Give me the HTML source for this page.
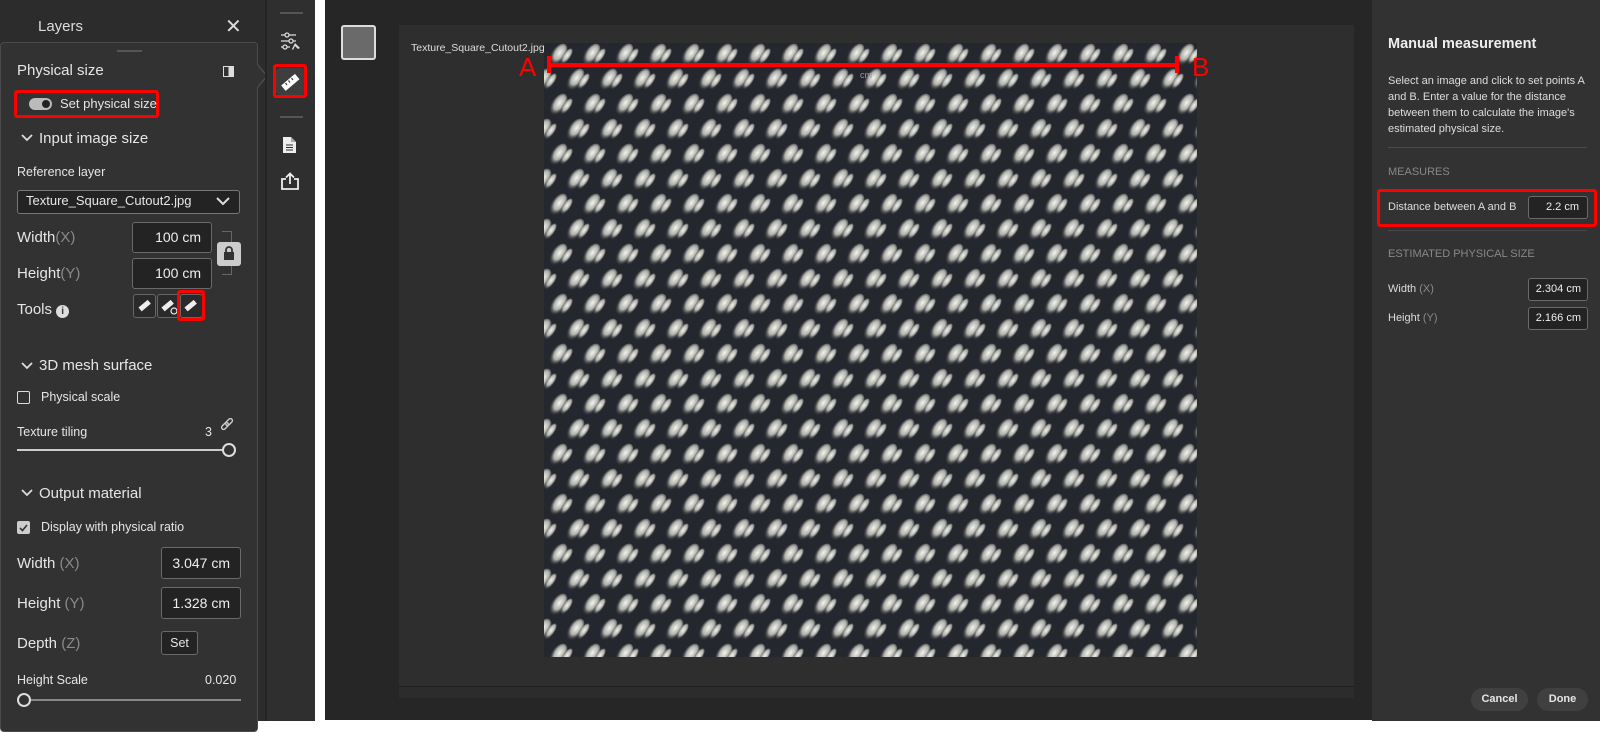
<!DOCTYPE html>
<html><head><meta charset="utf-8"><style>
*{margin:0;padding:0;box-sizing:border-box}
body{width:1600px;height:721px;overflow:hidden;background:#fff;font-family:"Liberation Sans",sans-serif;color:#e6e6e6;position:relative}
.a{position:absolute}
.t{position:absolute;white-space:nowrap}
.inp{position:absolute;border:1px solid #6a6a6a;border-radius:3px;background:#232323;text-align:right;padding-right:10px;color:#eee}
.g{color:#8a8a8a}
.rb{position:absolute;border:3px solid #f00;border-radius:3px}
.tb{position:absolute;border:1px solid #666;border-radius:3px;background:#2a2a2a;width:23px;height:24px}
</style></head><body>
<div class="a" style="left:0;top:0;width:267px;height:721px;background:#2c2c2c"></div>
<div class="t" style="left:38px;top:18px;font-size:15px;color:#ddd">Layers</div>
<div class="t" style="left:225px;top:14px;font-size:20px;color:#ddd">✕</div>
<div class="a" style="left:0;top:42px;width:258px;height:690px;background:#323232;border:1px solid #4a4a4a;border-radius:4px"></div>
<div class="a" style="left:258px;top:64px;width:0;height:0;border-top:12px solid transparent;border-bottom:12px solid transparent;border-left:10px solid #4a4a4a"></div>
<div class="a" style="left:257px;top:65px;width:0;height:0;border-top:11px solid transparent;border-bottom:11px solid transparent;border-left:9px solid #323232"></div>
<div class="a" style="left:117px;top:50px;width:25px;height:2px;background:#555"></div>
<div class="t" style="left:17px;top:62px;font-size:15px">Physical size</div>
<div class="a" style="left:223px;top:66px;width:11px;height:11px;border:1.5px solid #ddd;background:linear-gradient(90deg,transparent 50%,#ddd 50%)"></div>
<div class="rb" style="left:14px;top:90px;width:145px;height:28px"></div>
<div class="a" style="left:29px;top:98px;width:23px;height:12px;border-radius:6px;background:#bbb"></div>
<div class="a" style="left:42px;top:100px;width:8px;height:8px;border-radius:50%;background:#222"></div>
<div class="t" style="left:60px;top:96px;font-size:13px">Set physical size</div>
<svg class="a" style="left:21px;top:134px" width="12" height="8"><path d="M1 1L6 6L11 1" stroke="#ddd" stroke-width="1.8" fill="none"/></svg>
<div class="t" style="left:39px;top:130px;font-size:15px">Input image size</div>
<div class="t" style="left:17px;top:165px;font-size:12.5px">Reference layer</div>
<div class="a" style="left:17px;top:190px;width:223px;height:24px;border:1px solid #777;border-radius:3px;background:#232323"></div>
<div class="t" style="left:26px;top:193px;font-size:13px">Texture_Square_Cutout2.jpg</div>
<svg class="a" style="left:216px;top:196px" width="14" height="10"><path d="M1 2 L7 8 L13 2" stroke="#ddd" stroke-width="2" fill="none"/></svg>
<div class="t" style="left:17px;top:229px;font-size:15px">Width<span class="g">(X)</span></div>
<div class="inp" style="left:132px;top:222px;width:80px;height:31px;font-size:14px;line-height:29px">100 cm</div>
<div class="t" style="left:17px;top:265px;font-size:15px">Height<span class="g">(Y)</span></div>
<div class="inp" style="left:132px;top:258px;width:80px;height:31px;font-size:14px;line-height:29px">100 cm</div>
<div class="a" style="left:222px;top:231px;width:10px;height:44px;border:1px solid #666;border-left:none"></div>
<div class="a" style="left:217px;top:242px;width:24px;height:24px;background:#ccc;border-radius:3px"></div>
<svg class="a" style="left:223px;top:245px" width="12" height="17"><path d="M3 7V5a3 3 0 0 1 6 0v2" stroke="#333" stroke-width="1.8" fill="none"/><rect x="1" y="7" width="10" height="8" fill="#333"/></svg>
<div class="t" style="left:17px;top:301px;font-size:15px">Tools <span style="display:inline-block;width:13px;height:13px;border-radius:50%;background:#ddd;color:#333;font-size:10px;font-weight:bold;text-align:center;line-height:13px">i</span></div>
<div class="tb" style="left:133px;top:294px"></div>
<div class="tb" style="left:157px;top:294px"></div>
<div class="tb" style="left:180px;top:294px"></div>
<svg class="a" style="left:133px;top:294px" width="70" height="24"><g fill="#eee"><rect x="6" y="9" width="12" height="5" transform="rotate(-40 12 12)"/><rect x="29" y="9" width="12" height="5" transform="rotate(-40 35 12)"/><circle cx="41" cy="17" r="3" fill="none" stroke="#eee" stroke-width="1.2"/><rect x="52" y="9" width="12" height="5" transform="rotate(-40 58 12)"/></g></svg>
<div class="rb" style="left:177px;top:290px;width:28px;height:31px"></div>
<svg class="a" style="left:21px;top:362px" width="12" height="8"><path d="M1 1L6 6L11 1" stroke="#ddd" stroke-width="1.8" fill="none"/></svg>
<div class="t" style="left:39px;top:357px;font-size:15px">3D mesh surface</div>
<div class="a" style="left:17px;top:391px;width:13px;height:13px;border:1.5px solid #ddd;border-radius:2px"></div>
<div class="t" style="left:41px;top:390px;font-size:12.5px">Physical scale</div>
<div class="t" style="left:17px;top:425px;font-size:12.5px">Texture tiling</div>
<div class="t" style="left:205px;top:425px;font-size:12.5px">3</div>
<svg class="a" style="left:220px;top:418px" width="14" height="14"><g stroke="#ccc" stroke-width="1.4" fill="none"><rect x="1" y="6" width="8" height="4" rx="2" transform="rotate(-45 5 8)"/><rect x="5" y="2" width="8" height="4" rx="2" transform="rotate(-45 9 4)"/></g></svg>
<div class="a" style="left:17px;top:449px;width:206px;height:2px;background:#ccc"></div>
<div class="a" style="left:222px;top:443px;width:14px;height:14px;border:2px solid #ddd;border-radius:50%"></div>
<svg class="a" style="left:21px;top:489px" width="12" height="8"><path d="M1 1L6 6L11 1" stroke="#ddd" stroke-width="1.8" fill="none"/></svg>
<div class="t" style="left:39px;top:485px;font-size:15px">Output material</div>
<div class="a" style="left:17px;top:521px;width:13px;height:13px;background:#ccc;border-radius:2px"></div>
<svg class="a" style="left:17px;top:521px" width="13" height="13"><path d="M3 7 L5.5 9.5 L10 4" stroke="#333" stroke-width="1.6" fill="none"/></svg>
<div class="t" style="left:41px;top:520px;font-size:12.5px">Display with physical ratio</div>
<div class="t" style="left:17px;top:555px;font-size:15px">Width <span class="g">(X)</span></div>
<div class="inp" style="left:161px;top:547px;width:80px;height:32px;font-size:14px;line-height:30px">3.047 cm</div>
<div class="t" style="left:17px;top:595px;font-size:15px">Height <span class="g">(Y)</span></div>
<div class="inp" style="left:161px;top:587px;width:80px;height:32px;font-size:14px;line-height:30px">1.328 cm</div>
<div class="t" style="left:17px;top:635px;font-size:15px">Depth <span class="g">(Z)</span></div>
<div class="a" style="left:161px;top:631px;width:37px;height:24px;border:1px solid #6a6a6a;border-radius:3px;background:#232323;font-size:12.5px;text-align:center;line-height:22px">Set</div>
<div class="t" style="left:17px;top:673px;font-size:12.5px">Height Scale</div>
<div class="t" style="left:205px;top:673px;font-size:12.5px">0.020</div>
<div class="a" style="left:30px;top:699px;width:211px;height:2px;background:#888"></div>
<div class="a" style="left:17px;top:693px;width:14px;height:14px;border:2px solid #ddd;border-radius:50%"></div>
<div class="a" style="left:265px;top:0;width:2px;height:721px;background:#252525"></div>
<div class="a" style="left:267px;top:0;width:48px;height:721px;background:#2f2f2f"></div>
<div class="a" style="left:280px;top:12px;width:23px;height:2px;background:#555"></div>
<div class="a" style="left:280px;top:116px;width:23px;height:2px;background:#555"></div>
<svg class="a" style="left:280px;top:32px" width="24" height="20"><g stroke="#ddd" stroke-width="1.3" fill="none"><path d="M1 3H16M1 9H16M1 15H10"/><circle cx="7" cy="3" r="2" fill="#2f2f2f"/><circle cx="11" cy="9" r="2" fill="#2f2f2f"/><circle cx="5" cy="15" r="2" fill="#2f2f2f"/></g><path d="M15 11l5 5-2 1-3-3-2 4-1-1z" fill="#ddd"/></svg>
<div class="a" style="left:276px;top:68px;width:29px;height:27px;background:#3e3e3e;border-radius:4px"></div>
<div class="rb" style="left:273px;top:64px;width:34px;height:34px"></div>
<svg class="a" style="left:278px;top:70px" width="24" height="24"><rect x="3" y="9" width="18" height="7" fill="#fff" transform="rotate(-40 12 12)"/><g stroke="#3e3e3e" stroke-width="1.2"><path d="M9 15l-1.5-2M12 12.5l-1.5-2M15 10l-1.5-2"/></g></svg>
<svg class="a" style="left:282px;top:136px" width="16" height="18"><path d="M1 1H9L14 6V17H1Z" fill="#eee"/><path d="M9 1V6H14" fill="#aaa"/><path d="M4 9H11M4 11.5H11M4 14H11" stroke="#2f2f2f" stroke-width="1"/></svg>
<svg class="a" style="left:281px;top:172px" width="18" height="18"><path d="M5 7H1V17H17V7H13" stroke="#eee" stroke-width="1.8" fill="none"/><path d="M9 12V2M5 5.5L9 1.5L13 5.5" stroke="#eee" stroke-width="1.8" fill="none"/></svg>
<div class="a" style="left:325px;top:0;width:1047px;height:720px;background:#262626"></div>
<div class="a" style="left:341px;top:25px;width:35px;height:35px;border:2px solid #ddd;border-radius:3px;background:#6a6a6a"></div>
<div class="a" style="left:399px;top:25px;width:955px;height:661px;background:#2e2e2e"></div>
<div class="a" style="left:399px;top:686px;width:955px;height:1px;background:#1e1e1e"></div>
<div class="a" style="left:399px;top:687px;width:955px;height:11px;background:#2c2c2c"></div>
<div class="t" style="left:411px;top:42px;font-size:10.5px;color:#ddd">Texture_Square_Cutout2.jpg</div>
<svg class="a" style="left:544px;top:43px" width="653" height="614">
<defs>
<radialGradient id="gl" cx="50%" cy="40%" r="55%"><stop offset="0" stop-color="#f4f4f0"/><stop offset="0.55" stop-color="#b0b0aa"/><stop offset="1" stop-color="#3a3d44" stop-opacity="0"/></radialGradient>
<pattern id="p" width="33" height="50" patternUnits="userSpaceOnUse">
<rect width="33" height="50" fill="#25272e"/>
<ellipse cx="14" cy="12" rx="7" ry="13" fill="url(#gl)" transform="rotate(35 14 12)"/>
<ellipse cx="22" cy="14" rx="4" ry="10" fill="url(#gl)" transform="rotate(35 22 14)"/>
<ellipse cx="-2" cy="37" rx="7" ry="13" fill="url(#gl)" transform="rotate(35 -2 37)"/>
<ellipse cx="31" cy="37" rx="7" ry="13" fill="url(#gl)" transform="rotate(35 31 37)"/>
<ellipse cx="6" cy="39" rx="4" ry="10" fill="url(#gl)" transform="rotate(35 6 39)"/>
</pattern></defs>
<rect width="653" height="614" fill="url(#p)"/>
</svg>
<div class="a" style="left:550px;top:63px;width:626px;height:4px;background:#f00"></div>
<div class="a" style="left:547px;top:56px;width:4px;height:17px;background:#f00"></div>
<div class="a" style="left:1175px;top:56px;width:4px;height:17px;background:#f00"></div>
<div class="t" style="left:519px;top:52px;font-size:26px;color:#f00">A</div>
<div class="t" style="left:1192px;top:52px;font-size:26px;color:#f00">B</div>
<div class="t" style="left:860px;top:70px;font-size:9px;color:#999">cm</div>
<div class="a" style="left:1372px;top:0;width:228px;height:721px;background:#323232"></div>
<div class="t" style="left:1388px;top:36px;font-size:14.5px;font-weight:bold;color:#eee">Manual measurement</div>
<div class="t" style="left:1388px;top:73px;font-size:11px;line-height:16px;color:#ddd">Select an image and click to set points A<br>and B. Enter a value for the distance<br>between them to calculate the image's<br>estimated physical size.</div>
<div class="a" style="left:1388px;top:147px;width:199px;height:1px;background:#4a4a4a"></div>
<div class="t" style="left:1388px;top:166px;font-size:11px;color:#888">MEASURES</div>
<div class="rb" style="left:1377px;top:189px;width:220px;height:38px"></div>
<div class="t" style="left:1388px;top:201px;font-size:11px;color:#ddd">Distance between A and B</div>
<div class="inp" style="left:1528px;top:196px;width:60px;height:23px;font-size:11px;line-height:21px;padding-right:8px">2.2 cm</div>
<div class="a" style="left:1388px;top:230px;width:199px;height:1px;background:#4a4a4a"></div>
<div class="t" style="left:1388px;top:248px;font-size:11px;color:#888">ESTIMATED PHYSICAL SIZE</div>
<div class="t" style="left:1388px;top:283px;font-size:11px;color:#ddd">Width <span class="g">(X)</span></div>
<div class="inp" style="left:1528px;top:278px;width:60px;height:23px;font-size:11px;line-height:21px;padding-right:6px">2.304 cm</div>
<div class="t" style="left:1388px;top:312px;font-size:11px;color:#ddd">Height <span class="g">(Y)</span></div>
<div class="inp" style="left:1528px;top:307px;width:60px;height:23px;font-size:11px;line-height:21px;padding-right:6px">2.166 cm</div>
<div class="a" style="left:1471px;top:688px;width:57px;height:23px;border-radius:12px;background:#404040;font-size:11px;font-weight:bold;text-align:center;line-height:23px">Cancel</div>
<div class="a" style="left:1537px;top:688px;width:51px;height:23px;border-radius:12px;background:#404040;font-size:11px;font-weight:bold;text-align:center;line-height:23px">Done</div>
</body></html>
